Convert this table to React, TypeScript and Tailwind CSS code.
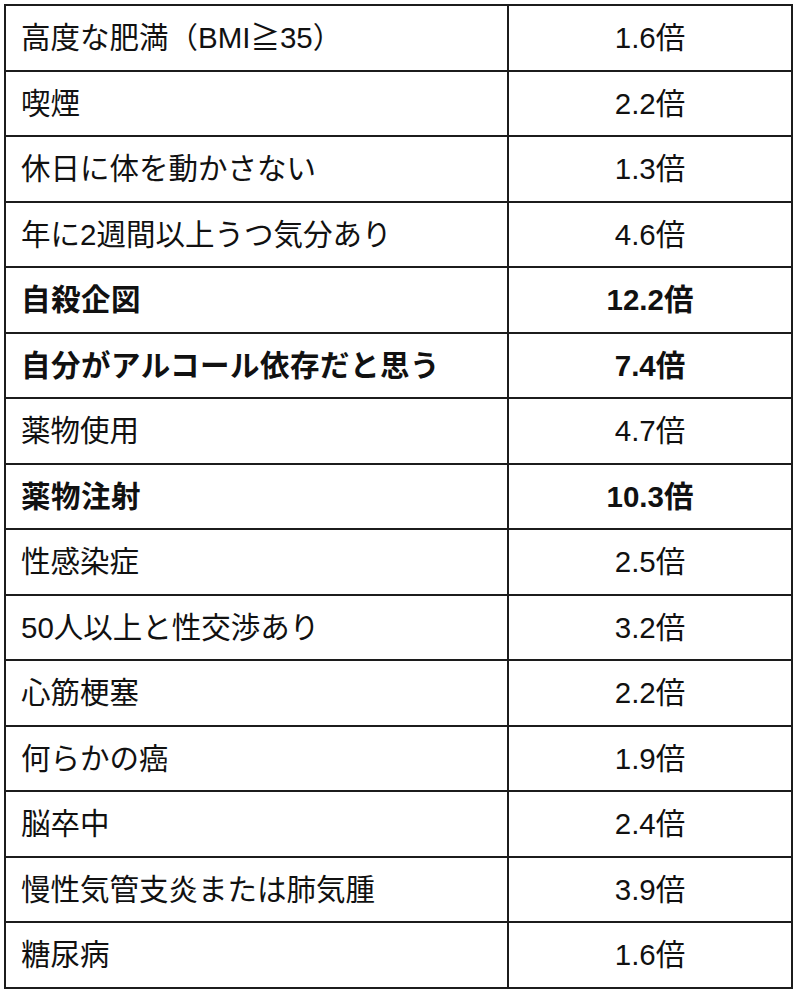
import React from "react";

type Row = { label: string; value: string; bold?: boolean };

const rows: Row[] = [
  { label: "高度な肥満（BMI≧35）", value: "1.6倍" },
  { label: "喫煙", value: "2.2倍" },
  { label: "休日に体を動かさない", value: "1.3倍" },
  { label: "年に2週間以上うつ気分あり", value: "4.6倍" },
  { label: "自殺企図", value: "12.2倍", bold: true },
  { label: "自分がアルコール依存だと思う", value: "7.4倍", bold: true },
  { label: "薬物使用", value: "4.7倍" },
  { label: "薬物注射", value: "10.3倍", bold: true },
  { label: "性感染症", value: "2.5倍" },
  { label: "50人以上と性交渉あり", value: "3.2倍" },
  { label: "心筋梗塞", value: "2.2倍" },
  { label: "何らかの癌", value: "1.9倍" },
  { label: "脳卒中", value: "2.4倍" },
  { label: "慢性気管支炎または肺気腫", value: "3.9倍" },
  { label: "糖尿病", value: "1.6倍" },
];

const App = () => {
  return (
    <div className="min-h-screen bg-white pl-[4px] pt-[4px] text-[#111] font-['Liberation_Sans','Noto_Sans_CJK_JP',sans-serif]">
      <table className="w-[789px] border-collapse table-fixed text-[29.5px] leading-none">
        <colgroup>
          <col className="w-[503px]" />
          <col />
        </colgroup>
        <tbody>
          {rows.map((r) => (
            <tr key={r.label} className="h-[65.5px]">
              <td
                className={`border-2 border-[#1c1c1c] pl-[15px] text-left ${
                  r.bold ? "font-bold tracking-[0.5px]" : "font-normal"
                }`}>
                {r.label}
              </td>
              <td
                className={`border-2 border-[#1c1c1c] text-center ${
                  r.bold ? "font-bold" : "font-normal"
                }`}>
                {r.value}
              </td>
            </tr>
          ))}
        </tbody>
      </table>
    </div>
  );
};

export default App;
